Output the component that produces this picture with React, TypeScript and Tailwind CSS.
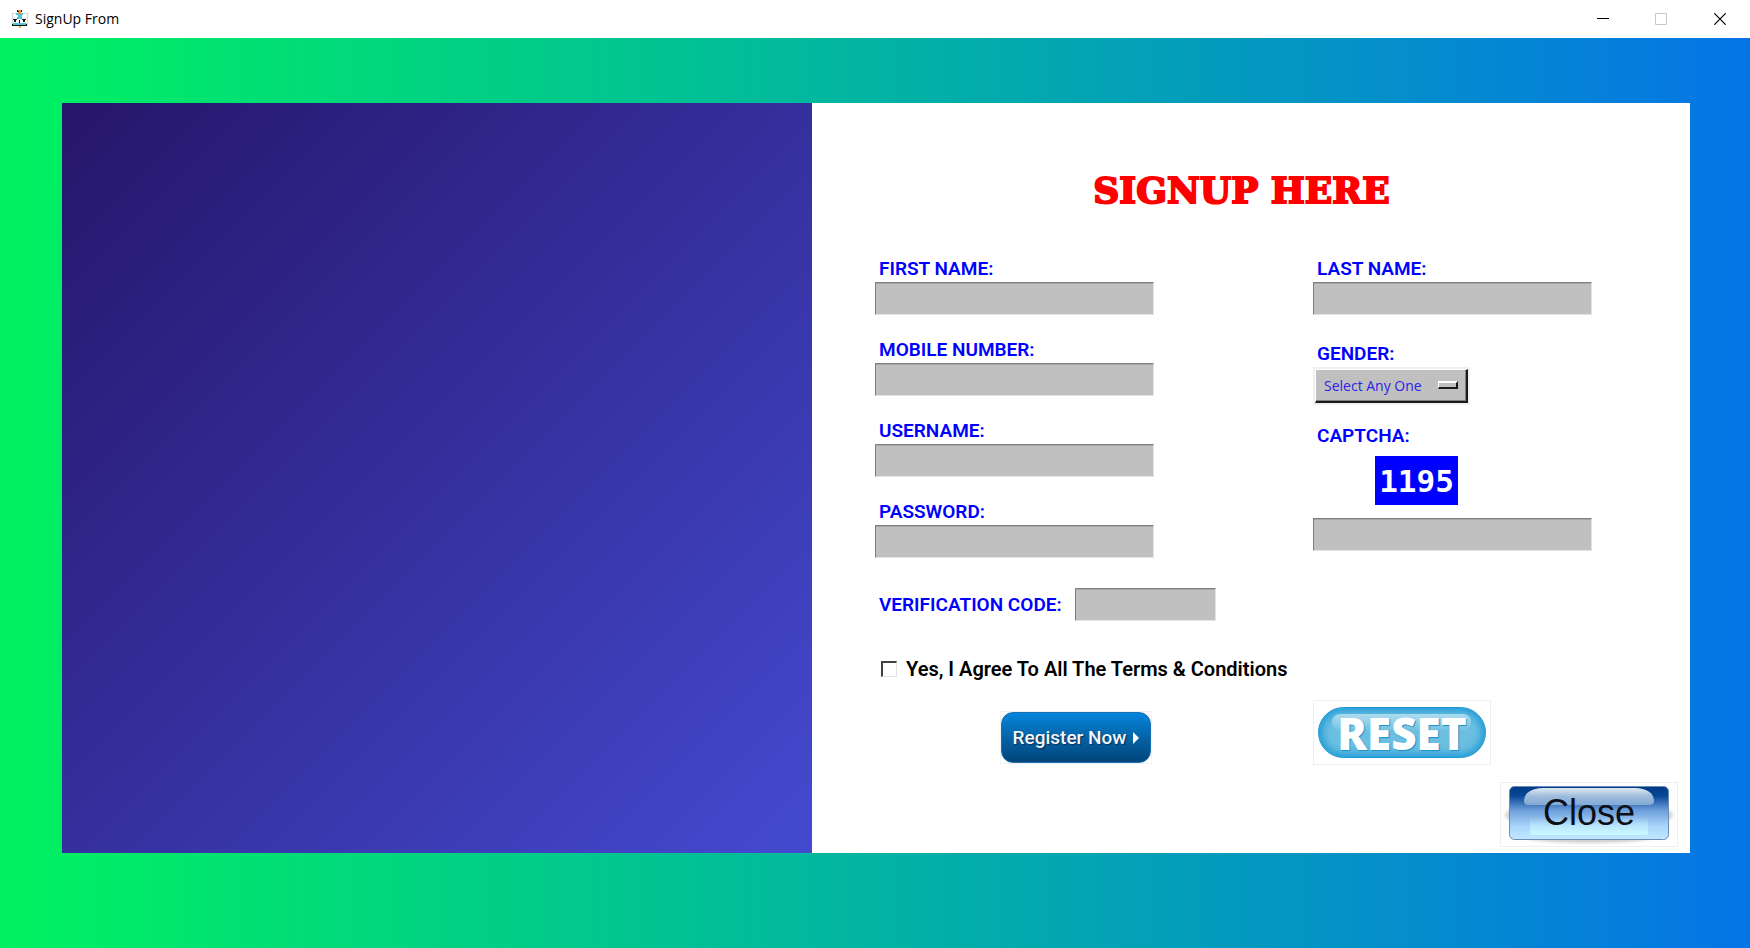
import React, { useState } from "react";

const labelClass =
  "flex h-[26px] items-center pl-1 font-[Roboto,sans-serif] text-[19px] leading-6 font-semibold text-[#0000ff] uppercase";
const inputClass =
  "h-[33px] w-full rounded-none border border-t-[#808080] border-l-[#808080] border-r-[#e3e3e3] border-b-[#e3e3e3] bg-[#c0c0c0] px-2 font-[Roboto,sans-serif] text-base text-black shadow-[inset_0_1px_0_#a6a6a6] outline-none";

function Field({ id, label, type = "text" }: { id: string; label: string; type?: string }) {
  return (
    <div className="w-full max-w-[279px]">
      <label htmlFor={id} className={labelClass}>
        {label}
      </label>
      <input id={id} name={id} type={type} className={inputClass + " block"} />
    </div>
  );
}

function AppIcon() {
  return (
    <svg width="16" height="18" viewBox="0 0 16 18" aria-hidden="true" shapeRendering="crispEdges">
      <rect x="0" y="3" width="16" height="12" fill="#cfd8dc" />
      <rect x="1" y="4" width="14" height="9" fill="#ffffff" />
      <rect x="0" y="14" width="15" height="2" fill="#111111" />
      <rect x="1" y="13" width="13" height="2" fill="#4fc3d9" />
      <rect x="5" y="0" width="1" height="2" fill="#1a1a1a" />
      <rect x="9" y="0" width="1" height="2" fill="#1a1a1a" />
      <rect x="6" y="0" width="3" height="4" fill="#e3943b" />
      <rect x="6" y="1" width="1" height="1" fill="#1a1a1a" />
      <rect x="4" y="3" width="2" height="2" fill="#4fc3d9" />
      <rect x="9" y="3" width="2" height="2" fill="#4fc3d9" />
      <rect x="6" y="4" width="4" height="5" fill="#4fc3d9" />
      <rect x="5" y="7" width="1" height="2" fill="#38a9c4" />
      <rect x="1" y="9" width="4" height="1" fill="#111111" />
      <rect x="10" y="9" width="4" height="1" fill="#111111" />
      <rect x="2" y="10" width="2" height="2" fill="#111111" />
      <rect x="7" y="10" width="1" height="3" fill="#111111" />
      <rect x="11" y="10" width="2" height="2" fill="#111111" />
      <rect x="7" y="16" width="2" height="2" fill="#f0ad3d" />
    </svg>
  );
}

function TitleBar() {
  return (
    <header className="flex h-[38px] shrink-0 items-center justify-between bg-white pl-3">
      <div className="flex items-center gap-[7px]">
        <AppIcon />
        <span className="font-['Open_Sans',sans-serif] text-[14px] leading-5 text-black">SignUp From</span>
      </div>
      <div className="flex h-full">
        <button aria-label="Minimize" className="flex w-[58px] items-center justify-center">
          <svg width="12" height="12" viewBox="0 0 12 12">
            <path d="M0 5.5H12" stroke="#000" />
          </svg>
        </button>
        <button aria-label="Maximize" disabled className="flex w-[58px] items-center justify-center">
          <svg width="12" height="12" viewBox="0 0 12 12">
            <path d="M.5 .5H11.5V11.5H.5Z" fill="none" stroke="#c8c8c8" />
          </svg>
        </button>
        <button aria-label="Close window" className="flex w-[60px] items-center justify-center">
          <svg width="12" height="12" viewBox="0 0 12 12">
            <path d="M.3 .3L11.7 11.7M11.7 .3L.3 11.7" stroke="#000" strokeWidth="1.2" />
          </svg>
        </button>
      </div>
    </header>
  );
}

function GenderSelect() {
  return (
    <div className="relative h-[38px] w-[157px] bg-[#f0f0f0] p-[2px]">
      <select
        id="gender"
        name="gender"
        className="block h-full w-full appearance-none rounded-none border-t border-l border-r-2 border-b-2 border-t-white border-l-white border-r-[#1a1a1a] border-b-[#1a1a1a] bg-[#c0c0c0] pl-2 font-['Open_Sans',sans-serif] text-[14px] leading-5 text-[#2a1fe6] shadow-[inset_-1px_-1px_0_#808080] outline-none"
      >
        <option>Select Any One</option>
        <option>Male</option>
        <option>Female</option>
      </select>
      <span className="pointer-events-none absolute top-[14px] right-3 h-2 w-5 border-t-2 border-r-2 border-b-2 border-l border-t-white border-r-[#1a1a1a] border-b-[#1a1a1a] border-l-white bg-[#c0c0c0]" />
    </div>
  );
}

function RegisterButton() {
  return (
    <button type="submit" className="mt-[11px] border border-[#f2f2f2]">
      <span className="flex h-[51px] w-[150px] items-center justify-center gap-[7px] rounded-xl border border-[#1a6fae] bg-linear-to-b/srgb from-[#0585dd] via-[#0563a6] to-[#00457a] font-[Roboto,sans-serif] text-[19px] leading-6 font-medium whitespace-nowrap text-[#f3f6fa] [text-shadow:1px_1px_1px_#00305c]">
        Register Now
        <svg width="6" height="12" viewBox="0 0 6 12" aria-hidden="true">
          <path d="M0 0L6 6L0 12Z" fill="#fff" />
        </svg>
      </span>
    </button>
  );
}

function ResetButton() {
  return (
    <button type="reset" className="flex h-[65px] w-[178px] items-center justify-center border border-[#efefef]">
      <span className="relative flex h-[51px] w-[168px] items-center justify-center rounded-full border border-[#1d97d2] bg-[#6cbfe0] shadow-[inset_0_0_9px_3px_#1c9ad6]">
        <span className="absolute top-[6px] right-[14px] left-[13px] h-4 rounded-full bg-linear-to-b from-white/50 to-white/5" />
        <span className="relative font-['Open_Sans',sans-serif] text-[44px] leading-[48px] font-extrabold text-white [text-shadow:1px_1px_1px_#1c8fc6]">
          RESET
        </span>
      </span>
    </button>
  );
}

function CloseButton() {
  return (
    <button type="button" className="relative flex h-[65px] w-[178px] justify-center border border-[#efefef] pt-[3px]">
      <svg className="absolute inset-0" width="176" height="63" viewBox="0 0 176 63" aria-hidden="true">
        <defs>
          <linearGradient id="close-body" x1="0" y1="0" x2="0" y2="1">
            <stop offset="0" stopColor="#003a86" />
            <stop offset=".18" stopColor="#0a4896" />
            <stop offset=".45" stopColor="#6d9edb" />
            <stop offset=".75" stopColor="#a9d6fa" />
            <stop offset="1" stopColor="#c0e8ff" />
          </linearGradient>
          <linearGradient id="close-shine" x1="0" y1="0" x2="0" y2="1">
            <stop offset="0" stopColor="#dfe9f3" />
            <stop offset=".5" stopColor="#9dbbdc" />
            <stop offset="1" stopColor="#82aad6" />
          </linearGradient>
          <linearGradient id="close-glow" x1="0" y1="0" x2="0" y2="1">
            <stop offset="0" stopColor="#c8f4ff" stopOpacity="0" />
            <stop offset="1" stopColor="#c8f8ff" />
          </linearGradient>
          <filter id="close-blur">
            <feGaussianBlur stdDeviation="1.5" />
          </filter>
        </defs>
        <ellipse cx="88" cy="32" rx="84" ry="16" fill="#d6d6d6" filter="url(#close-blur)" />
        <ellipse cx="88" cy="54" rx="64" ry="6" fill="#cfcfcf" filter="url(#close-blur)" />
        <rect x="8.500" y="3.500" width="159" height="53" rx="5" fill="url(#close-body)" stroke="#6c8bb8" />
        <path d="M23 18C23 10 31 5 42 5H134C145 5 153 10 153 18Q153 22 148 22H28Q23 22 23 18Z" fill="url(#close-shine)" />
        <rect x="29" y="34" width="118" height="18" rx="2" fill="url(#close-glow)" />
      </svg>
      <span className="relative font-['Liberation_Sans',sans-serif] text-[36px] leading-[54px] text-[#0b0f16]">Close</span>
    </button>
  );
}

export default function App() {
  const [agreed, setAgreed] = useState(false);

  return (
    <div className="flex min-h-screen flex-col bg-white">
      <TitleBar />
      <main className="flex flex-1 bg-linear-to-r/srgb from-[#00f260] to-[#0575e6] pt-[65px] pr-[60px] pb-[95px] pl-[62px]">
        <section className="flex-[750] bg-linear-to-br/srgb from-[#26156a] to-[#444ad0]" />
        <section className="flex flex-[878] flex-col bg-white">
          <form className="flex flex-1 flex-col pt-[63px] pr-3 pb-[6px] pl-[63px]" onSubmit={(e) => e.preventDefault()}>
            <h1 className="mb-[42px] pr-[70px] text-center font-['DejaVu_Serif',serif] text-[36px] leading-[48px] font-bold text-[#ff0000] [-webkit-text-stroke:2px_#ff0000]">
              SIGNUP HERE
            </h1>

            <div className="grid grid-cols-[438fr_365fr]">
              <div className="flex flex-col gap-[22px]">
                <Field id="first-name" label="First Name:" />
                <Field id="mobile" label="Mobile Number:" />
                <Field id="username" label="Username:" />
                <Field id="password" label="Password:" type="password" />
              </div>
              <div className="flex flex-col">
                <Field id="last-name" label="Last Name:" />
                <div className="mt-[26px]">
                  <label htmlFor="gender" className={labelClass}>
                    Gender:
                  </label>
                  <GenderSelect />
                </div>
                <div className="mt-[18px] w-full max-w-[279px]">
                  <label htmlFor="captcha" className={labelClass}>
                    Captcha:
                  </label>
                  <output className="mt-[7px] mb-[13px] ml-[62px] flex h-[49px] w-[83px] items-center justify-center bg-[#0000ff] font-['DejaVu_Sans_Mono',monospace] text-[31px] leading-9 font-bold text-white">
                    1195
                  </output>
                  <input id="captcha" name="captcha" className={inputClass + " block"} />
                </div>
              </div>
            </div>

            <div className="mt-[30px] flex items-center">
              <label htmlFor="verification" className={labelClass + " w-[200px] whitespace-nowrap"}>
                Verification Code:
              </label>
              <div className="w-[141px]">
                <input id="verification" name="verification" className={inputClass + " block"} />
              </div>
            </div>

            <div className="mt-9 flex items-center gap-[9px] pl-[6px]">
              <input
                id="agree"
                type="checkbox"
                checked={agreed}
                onChange={(e) => setAgreed(e.target.checked)}
                className="size-4 appearance-none border-t-2 border-r border-b border-l-2 border-t-[#404040] border-r-[#e3e3e3] border-b-[#e3e3e3] border-l-[#404040] bg-white checked:bg-black"
              />
              <label htmlFor="agree" className="font-[Roboto,sans-serif] text-[20px] leading-6 font-semibold text-black">
                Yes, I Agree To All The Terms &amp; Conditions
              </label>
            </div>

            <div className="mt-[19px] grid grid-cols-[438fr_365fr] items-start">
              <div className="pl-[125px]">
                <RegisterButton />
              </div>
              <ResetButton />
            </div>

            <div className="mt-auto flex justify-end">
              <CloseButton />
            </div>
          </form>
        </section>
      </main>
    </div>
  );
}
